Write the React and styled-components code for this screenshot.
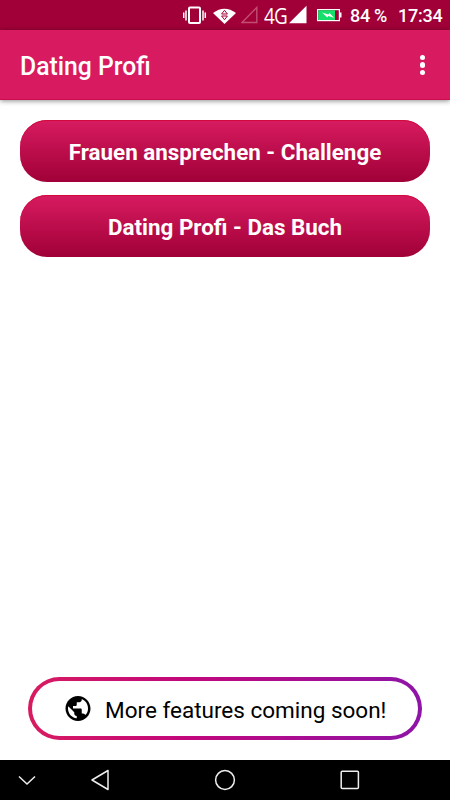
import styled, { createGlobalStyle } from 'styled-components';

const GlobalStyle = createGlobalStyle`
  * {
    box-sizing: border-box;
  }

  body {
    margin: 0;
    background: white;
    font-family: Roboto, sans-serif;
  }
`;

const Screen = styled.div`
  display: flex;
  flex-direction: column;
  height: 800px;
  width: 450px;
  overflow: hidden;
`;

const StatusBar = styled.div`
  display: flex;
  align-items: center;
  justify-content: flex-end;
  height: 30px;
  padding-right: 7px;
  background: #a00037;
  color: white;
  flex-shrink: 0;
`;

const StatusIcon = styled.svg`
  display: block;
  flex-shrink: 0;
  margin-right: ${(props) => props.$gap}px;
`;

const NetworkType = styled.div`
  width: 22px;
  margin-right: 3px;
  font-family: 'Open Sans', sans-serif;
  font-size: 21.5px;
  line-height: 31px;
  letter-spacing: -1px;
  transform: scaleX(0.88);
  transform-origin: left center;
`;

const StatusText = styled.div`
  width: ${(props) => props.$width}px;
  margin-right: ${(props) => props.$gap || 0}px;
  padding-top: 2px;
  font-size: 18px;
  font-weight: 500;
  line-height: 28px;
  letter-spacing: ${(props) => props.$spacing || 0}px;
  white-space: nowrap;
`;

const AppBar = styled.header`
  display: flex;
  align-items: center;
  justify-content: space-between;
  height: 70px;
  padding: 1px 25px 0 20px;
  background: #d81b60;
  box-shadow: 0 1px 5px rgba(0, 0, 0, 0.45);
  border-bottom: 1px solid #cb0c4e;
  flex-shrink: 0;
`;

const Title = styled.h1`
  margin: 0;
  padding-top: 2px;
  color: white;
  font-size: 25.4px;
  font-weight: 500;
  transform: scaleX(0.975);
  transform-origin: left center;
`;

const MenuButton = styled.button`
  display: flex;
  flex-direction: column;
  gap: 2px;
  padding: 0;
  border: 0;
  background: transparent;
`;

const Dot = styled.span`
  width: 5.5px;
  height: 5.5px;
  border-radius: 50%;
  background: white;
`;

const Content = styled.main`
  display: flex;
  flex-direction: column;
  flex: 1;
  gap: 13px;
  padding: 20px 20px;
`;

const MainButton = styled.button`
  height: 62px;
  width: 100%;
  padding: 1px 0 0;
  border: 0;
  border-radius: 27px;
  background: linear-gradient(#d81b60, #a00037);
  box-shadow: inset 0 1px 0 #cf0a3c;
  color: white;
  font-family: inherit;
  font-size: 22.4px;
  font-weight: 700;
`;

const Teaser = styled.div`
  display: flex;
  align-items: center;
  height: 63px;
  margin: auto 8px 0;
  padding-left: 31px;
  border: 4px solid transparent;
  border-radius: 32px;
  background:
    linear-gradient(white, white) padding-box,
    linear-gradient(90deg, #d81b60, #c2077c 40%, #8e14a8) border-box;
`;

const GlobeIcon = styled.svg`
  width: 30px;
  height: 30px;
  margin-right: 12px;
  fill: black;
  flex-shrink: 0;
`;

const TeaserText = styled.span`
  padding-top: 3px;
  color: black;
  font-size: 22.5px;
  white-space: nowrap;
`;

const NavBar = styled.nav`
  display: flex;
  align-items: center;
  height: 40px;
  padding-left: 17px;
  background: black;
  flex-shrink: 0;
`;

const NavIcon = styled.svg`
  display: block;
  margin-right: ${(props) => props.$gap || 0}px;
  fill: none;
  stroke: #eee;
  stroke-width: 1.5;
`;

export default function App() {
  return (
    <>
      <GlobalStyle />
      <Screen>
        <StatusBar>
          <StatusIcon width="24" height="30" $gap={6}>
            <rect x="6" y="7.5" width="11" height="15.5" rx="1" fill="none" stroke="white" strokeWidth="2" />
            <path d="M3 10.5v10M20 10.5v10M.7 12.5v5.5M22.3 12.5v5.5" stroke="white" strokeWidth="1.5" />
          </StatusIcon>
          <StatusIcon width="23" height="30" $gap={5}>
            <path d="M0 13Q11.5 4.5 23 13L11.5 24Z" fill="white" />
            <path d="M11.5 10.3l2.9 3.7H8.6zM8.6 16h5.8l-2.9 3.7z" fill="none" stroke="#a00037" strokeWidth="1" />
          </StatusIcon>
          <StatusIcon width="18" height="30" $gap={5}>
            <path d="M1 22.5L15.8 7.5V22.5Z" fill="none" stroke="#c44d72" strokeWidth="1.4" />
          </StatusIcon>
          <NetworkType>4G</NetworkType>
          <StatusIcon width="18" height="30" $gap={10}>
            <path d="M0 23.3L17.5 5.7V23.3Z" fill="white" />
          </StatusIcon>
          <StatusIcon width="25" height="30" $gap={8}>
            <rect x=".6" y="9.6" width="21.8" height="11" fill="#a00037" stroke="white" strokeWidth="1.2" />
            <rect x="1.2" y="10.2" width="16.8" height="9.8" fill="#12e06a" />
            <rect x="22.5" y="12.5" width="2" height="5" fill="white" />
            <path d="M5 12.5l6.5 2 .8-1.8 4.7 5-5.7-1.7-1 1.6z" fill="white" />
          </StatusIcon>
          <StatusText $width={37} $gap={11} $spacing={-0.3}>84 %</StatusText>
          <StatusText $width={45} $spacing={-0.25}>17:34</StatusText>
        </StatusBar>
        <AppBar>
          <Title>Dating Profi</Title>
          <MenuButton aria-label="Menu">
            <Dot />
            <Dot />
            <Dot />
          </MenuButton>
        </AppBar>
        <Content>
          <MainButton>Frauen ansprechen - Challenge</MainButton>
          <MainButton>Dating Profi - Das Buch</MainButton>
          <Teaser>
            <GlobeIcon viewBox="0 0.5 24 24">
              <path d="M12 2C6.48 2 2 6.48 2 12s4.48 10 10 10 10-4.48 10-10S17.52 2 12 2zm-1 17.93c-3.95-.49-7-3.85-7-7.93 0-.62.08-1.21.21-1.79L9 15v1c0 1.1.9 2 2 2v1.93zm6.9-2.54c-.26-.81-1-1.39-1.9-1.39h-1v-3c0-.55-.45-1-1-1H8v-2h2c.55 0 1-.45 1-1V7h2c1.1 0 2-.9 2-2v-.41c2.93 1.19 5 4.06 5 7.41 0 2.08-.8 3.97-2.1 5.39z" />
            </GlobeIcon>
            <TeaserText>More features coming soon!</TeaserText>
          </Teaser>
        </Content>
        <NavBar>
          <NavIcon width="20" height="40" $gap={53}>
            <path d="M2 16.5l8 7.5 8-7.5" />
          </NavIcon>
          <NavIcon width="20" height="40" $gap={104}>
            <path d="M2 20L18 10.5v19z" strokeLinejoin="round" />
          </NavIcon>
          <NavIcon width="22" height="40" $gap={104}>
            <circle cx="11" cy="20" r="9.4" />
          </NavIcon>
          <NavIcon width="20" height="40">
            <rect x="1.2" y="11.2" width="17.2" height="17.2" rx="1" />
          </NavIcon>
        </NavBar>
      </Screen>
    </>
  );
}
